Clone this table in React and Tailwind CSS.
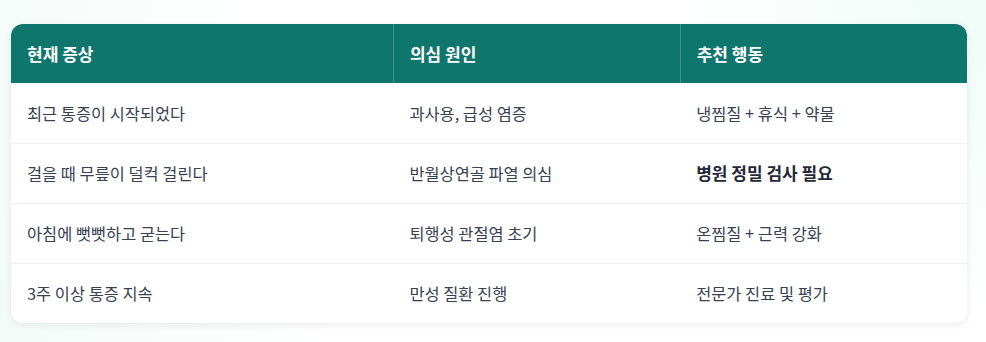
import React from "react";

const rows = [
  { symptom: "최근 통증이 시작되었다", cause: "과사용, 급성 염증", action: "냉찜질 + 휴식 + 약물" },
  { symptom: "걸을 때 무릎이 덜컥 걸린다", cause: "반월상연골 파열 의심", action: "병원 정밀 검사 필요", strong: true },
  { symptom: "아침에 뻣뻣하고 굳는다", cause: "퇴행성 관절염 초기", action: "온찜질 + 근력 강화" },
  { symptom: "3주 이상 통증 지속", cause: "만성 질환 진행", action: "전문가 진료 및 평가" },
];

export default function App() {
  return (
    <div
      className="min-h-screen w-full bg-[radial-gradient(circle_at_100%_0%,#effcf8_0%,#ffffff_30%,#ffffff_70%,#f3fbf8_100%)] pt-[24px] pl-[11px] pr-[19px]"
      style={{ fontFamily: '"Noto Sans CJK KR", "Noto Sans", sans-serif' }}
    >
      <div className="w-[956px] overflow-hidden rounded-xl bg-white shadow-[0_2px_8px_rgba(0,0,0,0.08)]">
        <table className="w-full table-fixed border-collapse text-left">
          <colgroup>
            <col className="w-[40%]" />
            <col className="w-[30%]" />
            <col className="w-[30%]" />
          </colgroup>
          <thead>
            <tr className="h-[59px] bg-[#0f766e] text-white">
              <th className="border-b border-r border-white/20 px-4 text-[17px] font-bold">현재 증상</th>
              <th className="border-b border-r border-white/20 px-4 text-[17px] font-bold">의심 원인</th>
              <th className="border-b border-white/20 px-4 text-[17px] font-bold">추천 행동</th>
            </tr>
          </thead>
          <tbody>
            {rows.map((r, i) => (
              <tr
                key={i}
                className={i < rows.length - 1 ? "h-[60px] border-b border-[#eeeff2]" : "h-[60px]"}
              >
                <td className="px-4 text-[16.4px] text-[#374151]">{r.symptom}</td>
                <td className="px-4 text-[16.4px] text-[#374151]">{r.cause}</td>
                <td
                  className={
                    r.strong
                      ? "px-4 text-[17px] font-bold text-[#1f2937]"
                      : "px-4 text-[16.4px] text-[#374151]"
                  }
                >
                  {r.action}
                </td>
              </tr>
            ))}
          </tbody>
        </table>
      </div>
    </div>
  );
}
